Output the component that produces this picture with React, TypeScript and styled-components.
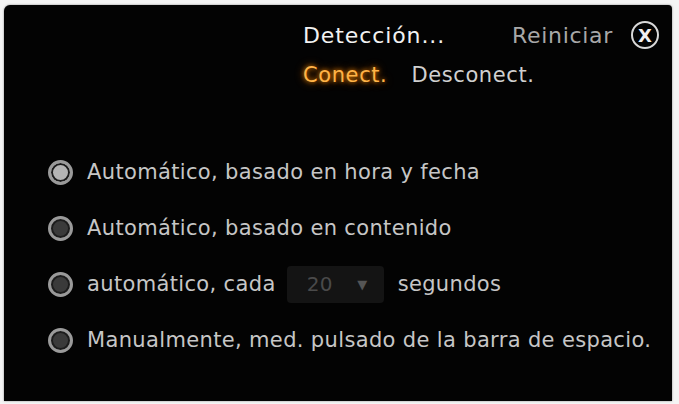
import * as React from 'react';
import styled, { createGlobalStyle } from 'styled-components';

const GlobalStyle = createGlobalStyle`
  html, body {
    margin: 0;
    padding: 0;
    background: #f4f4f4;
  }
`;

const Page = styled.div`
  width: 679px;
  height: 404px;
  padding: 5px 7px 3px 4px;
  box-sizing: border-box;
`;

const Panel = styled.div`
  height: 100%;
  background: #030303;
  border-radius: 6px 4px 0 0;
  box-shadow: 0 0 2px rgba(0, 0, 0, 0.5);
  display: flex;
  flex-direction: column;
  font-family: 'DejaVu Sans', sans-serif;
`;

const Header = styled.div`
  display: flex;
  flex-direction: column;
  align-items: flex-start;
  padding: 16px 0 0 299px;
`;

const TopRow = styled.div`
  display: flex;
  align-items: center;
  width: 100%;
  box-sizing: border-box;
  padding-right: 13px;
`;

const Title = styled.span`
  color: #f2f2f2;
  font-size: 22px;
  letter-spacing: 0.9px;
`;

const Reset = styled.span`
  color: #a8a8a8;
  font-size: 22px;
  letter-spacing: 0.7px;
  margin-left: auto;
`;

const CloseBtn = styled.div`
  width: 24px;
  height: 24px;
  margin-left: 18px;
  border: 2px solid #d8d8d8;
  border-radius: 50%;
  display: flex;
  align-items: center;
  justify-content: center;
  color: #f0f0f0;
  font-size: 18px;
  font-weight: bold;
`;

const Tabs = styled.div`
  display: flex;
  gap: 24px;
  margin-top: 14px;
`;

const Tab = styled.span<{ $active?: boolean }>`
  font-size: 21px;
  letter-spacing: 0.6px;
  color: ${p => (p.$active ? '#ffb347' : '#d0d0d0')};
  text-shadow: ${p => (p.$active ? '0 0 4px #e07b00, 0 0 8px #b35a00' : 'none')};
`;

const Options = styled.div`
  display: flex;
  flex-direction: column;
  gap: 24px;
  padding: 69px 0 0 44px;
`;

const Option = styled.div`
  display: flex;
  align-items: center;
  height: 32px;
  color: #c6c6c6;
  font-size: 21px;
  letter-spacing: 0.35px;
`;

const Radio = styled.span<{ $checked?: boolean }>`
  width: 19px;
  height: 19px;
  border-radius: 50%;
  border: 3px solid #9a9a9a;
  box-shadow: inset 0 0 0 2px #1c1c1c;
  background: ${p => (p.$checked ? '#b4b4b4' : '#3a3a3a')};
  margin-right: 14px;
  flex-shrink: 0;
`;

const Select = styled.div`
  width: 97px;
  height: 37px;
  margin: 0 14px 0 11px;
  background: #141414;
  border-radius: 4px;
  display: flex;
  align-items: center;
  padding: 0 16px 0 20px;
  box-sizing: border-box;
  color: #4a4a4a;
  font-size: 20px;
`;

const Arrow = styled.span`
  margin-left: auto;
  font-size: 13px;
  color: #555;
`;

const App: React.FC = () => (
  <Page>
    <GlobalStyle />
    <Panel>
      <Header>
        <TopRow>
          <Title>Detección...</Title>
          <Reset>Reiniciar</Reset>
          <CloseBtn>X</CloseBtn>
        </TopRow>
        <Tabs>
          <Tab $active>Conect.</Tab>
          <Tab>Desconect.</Tab>
        </Tabs>
      </Header>
      <Options>
        <Option>
          <Radio $checked />
          Automático, basado en hora y fecha
        </Option>
        <Option>
          <Radio />
          Automático, basado en contenido
        </Option>
        <Option>
          <Radio />
          automático, cada
          <Select>
            20
            <Arrow>▼</Arrow>
          </Select>
          segundos
        </Option>
        <Option>
          <Radio />
          Manualmente, med. pulsado de la barra de espacio.
        </Option>
      </Options>
    </Panel>
  </Page>
);

export default App;
